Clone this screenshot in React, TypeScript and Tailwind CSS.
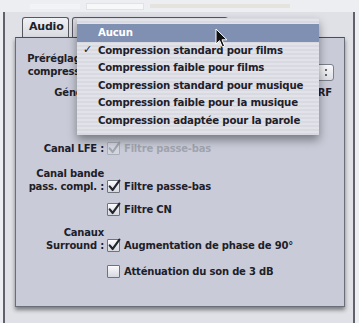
import React from "react";

const font = "font-['DejaVu_Sans',_'Liberation_Sans',_sans-serif]";

function CheckBox({ checked, disabled }: { checked?: boolean; disabled?: boolean }) {
  return (
    <div
      className={
        "relative w-[13px] h-[13px] shrink-0 rounded-[1px] border " +
        (disabled
          ? "border-[#a9adb8] bg-[#d3d6df]"
          : "border-[#6f737e] bg-gradient-to-b from-[#fbfbfd] to-[#d6d8df]")
      }
    >
      {checked && (
        <svg viewBox="0 0 13 13" className="absolute -left-[1px] -top-[2px] w-[14px] h-[14px]">
          <path
            d="M2.5 6.8 L5.3 10.2 L11.5 1.5"
            fill="none"
            stroke={disabled ? "#a3a7b2" : "#23252e"}
            strokeWidth="2"
            strokeLinecap="round"
            strokeLinejoin="round"
          />
        </svg>
      )}
    </div>
  );
}

function Row({
  label,
  children,
  className = "",
}: {
  label: React.ReactNode;
  children: React.ReactNode;
  className?: string;
}) {
  return (
    <div className={"flex items-end " + className}>
      <div className="w-[81px] shrink-0 text-right leading-[13px] pr-[3px] whitespace-nowrap">{label}</div>
      <div className="flex items-center gap-[4px] h-[13px] whitespace-nowrap">{children}</div>
    </div>
  );
}

const menuItems = [
  "Compression standard pour films",
  "Compression faible pour films",
  "Compression standard pour musique",
  "Compression faible pour la musique",
  "Compression adaptée pour la parole",
];

export default function App() {
  return (
    <div
      className={
        "relative w-[359px] h-[323px] overflow-hidden bg-[#eceef2] text-[10px] font-bold text-[#1e2029] tracking-[-0.2px] " +
        font
      }
    >
      {/* blurred title strip */}
      <div className="h-[12px] flex items-center gap-[6px] pl-[30px] opacity-60">
        <div className="w-[50px] h-[5px] bg-[#f7f7f9]" />
        <div className="w-[58px] h-[7px] bg-white border border-[#d9dbe0]" />
        <div className="w-[140px] h-[4px] bg-[#e2dcd0]" />
      </div>

      {/* window */}
      <div className="ml-[3px] w-[352px] h-[311px] border-l-2 border-r-2 border-[#5f626b] bg-[#dfe1e6] flex flex-col">
        {/* tabs */}
        <div className="flex items-end h-[25px] pl-[17px] gap-[3px]">
          <div className="w-[47px] h-[20px] rounded-t-[3px] border border-b-0 border-[#55585f] bg-gradient-to-b from-[#f0f1f4] to-[#d8dadf] flex items-center pl-[6px] text-[11px]">
            Audio
          </div>
          <div className="w-[156px] h-[20px] rounded-t-[3px] border border-b-0 border-[#55585f] bg-[#d9dbe1]" />
        </div>

        {/* panel */}
        <div className="relative ml-[10px] w-[330px] h-[270px] border border-[#6a6e78] border-t-[#4b4e56] bg-[#c9ccd8] shadow-[0_3px_4px_rgba(0,0,0,0.45)] pt-[14px] pl-[10px]">
          <Row label={<>Préréglage de<br />compression :</>}>
            <div className="w-[227px] h-[17px] mb-[-2px] rounded-[3px] border border-[#7c808a] bg-gradient-to-b from-[#fafafc] to-[#dcdee4] flex justify-end">
              <div className="w-[15px] h-full border-l border-[#9a9ea8] flex flex-col items-center justify-center gap-[3px]">
                <div className="w-[2px] h-[2px] bg-[#3a3c44] rounded-full" />
                <div className="w-[2px] h-[2px] bg-[#3a3c44] rounded-full" />
              </div>
            </div>
          </Row>
          <Row label="Général :" className="mt-[8px]">
            <CheckBox />
            <span className="w-[208px] text-right">Pré-accentuation RF</span>
          </Row>

          <Row label="Canal LFE :" className="mt-[43px]">
            <CheckBox checked disabled />
            <span className="text-[#a0a4ae]">Filtre passe-bas</span>
          </Row>
          <Row label={<>Canal bande<br />pass. compl. :</>} className="mt-[12px]">
            <CheckBox checked />
            <span>Filtre passe-bas</span>
          </Row>
          <Row label="" className="mt-[10px]">
            <CheckBox checked />
            <span>Filtre CN</span>
          </Row>
          <Row label={<>Canaux<br />Surround :</>} className="mt-[10px]">
            <CheckBox checked />
            <span>Augmentation de phase de 90°</span>
          </Row>
          <Row label="" className="mt-[13px]">
            <CheckBox />
            <span>Atténuation du son de 3 dB</span>
          </Row>
        </div>
      </div>

      {/* popup menu */}
      <div className="absolute left-[77px] top-[18px] w-[242px] pt-[6px] pb-[6px] bg-[repeating-linear-gradient(0deg,#d9dae1_0px,#d9dae1_2px,#e2e3e8_2px,#e2e3e8_4px)] shadow-[0_5px_9px_rgba(0,0,0,0.4)] text-[10.2px] whitespace-nowrap">
        <div className="h-[17.5px] bg-[#8090b3] text-white flex items-center pl-[21px]">Aucun</div>
        {menuItems.map((item, i) => (
          <div key={item} className="h-[17.5px] flex items-center">
            <span className="w-[21px] pl-[6px] text-[11px]">{i === 0 ? "✓" : ""}</span>
            {item}
          </div>
        ))}
      </div>

      {/* mouse cursor */}
      <svg className="absolute left-[215px] top-[28px] w-[14px] h-[21px]" viewBox="0 0 14 21">
        <path
          d="M1 1 L1 16 L4.6 12.6 L7.3 19 L9.6 18 L7 11.8 L12 11.8 Z"
          fill="#111"
          stroke="#fff"
          strokeWidth="1"
          strokeLinejoin="round"
        />
      </svg>
    </div>
  );
}
